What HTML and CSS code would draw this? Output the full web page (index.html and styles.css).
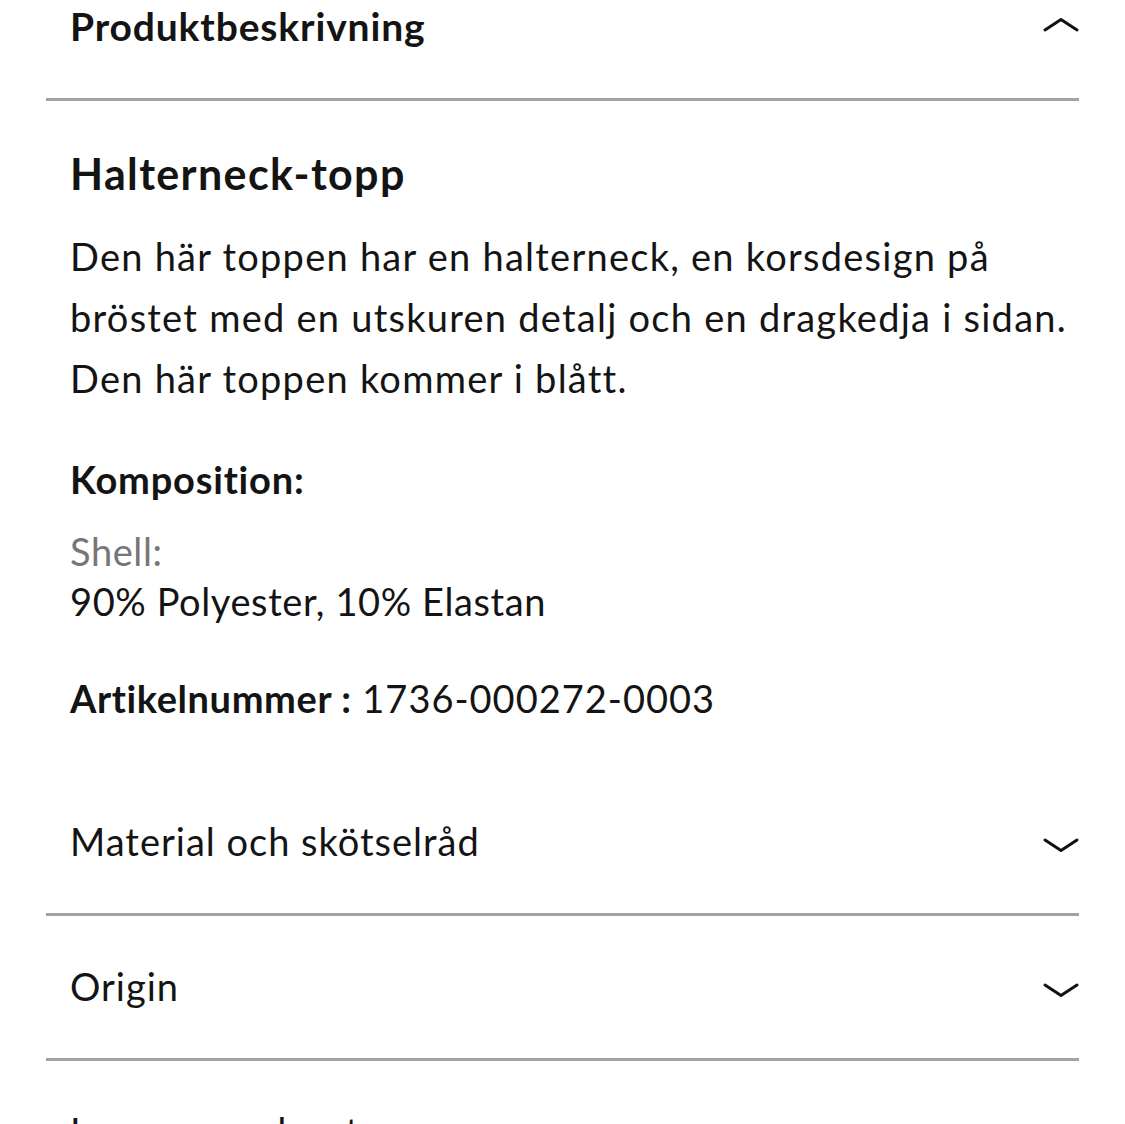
FILE: index.html
```html
<!DOCTYPE html>
<html lang="sv">
<head>
<meta charset="utf-8">
<title>Produktbeskrivning</title>
<link rel="stylesheet" href="styles.css">
</head>
<body>
<div class="panel">
  <section class="acc acc-open">
    <div class="acc-head acc-head-first">
      <h2 class="acc-title acc-title-bold">Produktbeskrivning</h2>
      <svg class="chev chev-up" width="36" height="15" viewBox="0 0 36 15"><path d="M2 13 L18 2.5 L34 13" fill="none" stroke="#111" stroke-width="3" stroke-linecap="round" stroke-linejoin="round"/></svg>
    </div>
    <div class="acc-body">
      <h3 class="prod-name">Halterneck-topp</h3>
      <p class="desc">Den här toppen har en halterneck, en korsdesign på<br>bröstet med en utskuren detalj och en dragkedja i sidan.<br>Den här toppen kommer i blått.</p>
      <h4 class="comp-title">Komposition:</h4>
      <p class="comp"><span class="muted">Shell:</span><br>90% Polyester, 10% Elastan</p>
      <p class="sku"><b>Artikelnummer :</b> 1736-000272-0003</p>
    </div>
  </section>
  <section class="acc acc-closed">
    <div class="acc-head">
      <h2 class="acc-title">Material och skötselråd</h2>
      <svg class="chev chev-down" width="36" height="15" viewBox="0 0 36 15"><path d="M2 2 L18 12.5 L34 2" fill="none" stroke="#111" stroke-width="3" stroke-linecap="round" stroke-linejoin="round"/></svg>
    </div>
  </section>
  <section class="acc acc-closed">
    <div class="acc-head">
      <h2 class="acc-title">Origin</h2>
      <svg class="chev chev-down" width="36" height="15" viewBox="0 0 36 15"><path d="M2 2 L18 12.5 L34 2" fill="none" stroke="#111" stroke-width="3" stroke-linecap="round" stroke-linejoin="round"/></svg>
    </div>
  </section>
  <section class="acc acc-closed">
    <div class="acc-head">
      <h2 class="acc-title">Leverans och returer</h2>
      <svg class="chev chev-down" width="36" height="15" viewBox="0 0 36 15"><path d="M2 2 L18 12.5 L34 2" fill="none" stroke="#111" stroke-width="3" stroke-linecap="round" stroke-linejoin="round"/></svg>
    </div>
  </section>
</div>
</body>
</html>
```
FILE: styles.css
```css
html, body {
  margin: 0;
  padding: 0;
  background: #ffffff;
}
body {
  font-family: "Lato", "Liberation Sans", sans-serif;
  color: #141414;
  overflow: hidden;
}
.panel {
  margin-left: 46px;
  width: 1033px;
}
h2, h3, h4, p {
  margin: 0;
  font-weight: 400;
}
.acc-head {
  display: flex;
  justify-content: space-between;
  align-items: center;
  padding-left: 24px;
  box-sizing: border-box;
  height: 145px;
  padding-bottom: 3px;
  border-bottom: 3px solid #a2a2a2;
}
.acc-title {
  font-size: 38px;
  line-height: 44px;
  letter-spacing: 1px;
}
.acc-title-bold {
  font-weight: 700;
  font-size: 39px;
  line-height: 46px;
  letter-spacing: 0.85px;
}
.acc-head-first {
  align-items: flex-start;
  height: 101px;
  padding-top: 3px;
  padding-bottom: 0;
}
.chev {
  display: block;
  flex: none;
}
.chev-up {
  margin-top: 14px;
}
.chev-down {
  margin-top: 10px;
}
.acc-body {
  padding: 50px 0 51px 24px;
}
.prod-name {
  font-weight: 700;
  font-size: 43px;
  line-height: 46px;
  letter-spacing: 1.35px;
}
.desc {
  margin-top: 29px;
  font-size: 38px;
  line-height: 61px;
  letter-spacing: 1.25px;
}
.comp-title {
  margin-top: 48px;
  font-weight: 700;
  font-size: 38px;
  line-height: 44px;
  letter-spacing: 0.8px;
}
.comp {
  margin-top: 25px;
  font-size: 38px;
  line-height: 50px;
  letter-spacing: 0.6px;
}
.muted {
  color: #767676;
}
.sku {
  margin-top: 50px;
  font-size: 38px;
  line-height: 44px;
  letter-spacing: 1px;
}
.sku b {
  font-weight: 700;
  letter-spacing: 0.6px;
}
```
